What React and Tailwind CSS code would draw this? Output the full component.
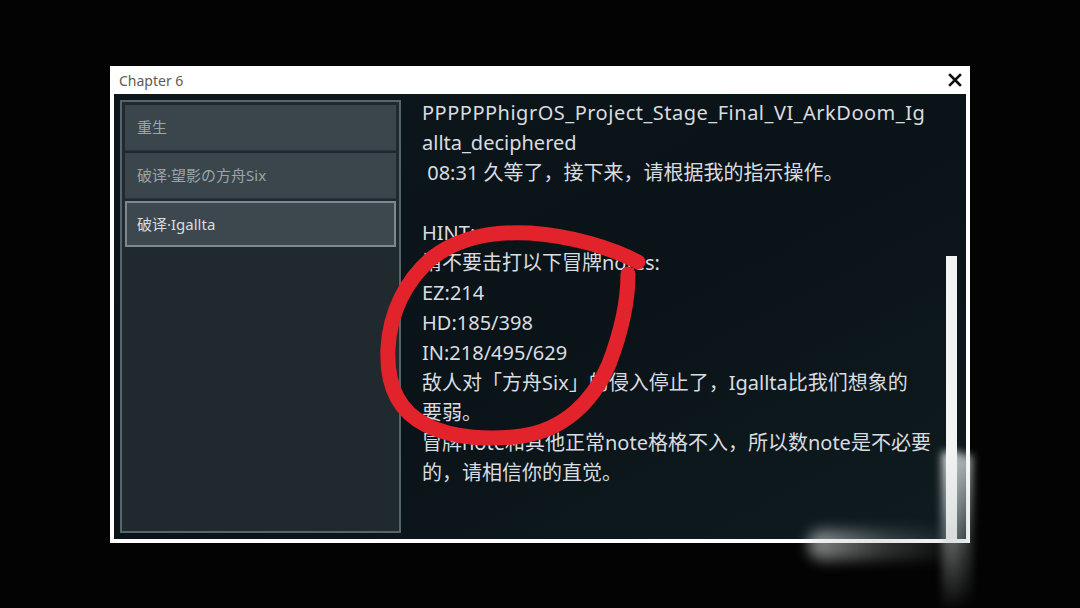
const chapters = [
  { label: '重生', active: false },
  { label: '破译·望影の方舟Six', active: false },
  { label: '破译·Igallta', active: true },
];

const lines = [
  'PPPPPPhigrOS_Project_Stage_Final_VI_ArkDoom_Ig',
  'allta_deciphered',
  '\u00a008:31 久等了，接下来，请根据我的指示操作。',
  '\u00a0',
  'HINT:',
  '请不要击打以下冒牌notes:',
  'EZ:214',
  'HD:185/398',
  'IN:218/495/629',
  '敌人对「方舟Six」的侵入停止了，Igallta比我们想象的',
  '要弱。',
  '冒牌note和其他正常note格格不入，所以数note是不必要',
  '的，请相信你的直觉。',
];

const font = { fontFamily: '"Noto Sans", "Noto Sans CJK SC", sans-serif' };

export default function App() {
  return (
    <div className="relative w-[1080px] h-[608px] overflow-hidden bg-[#030303]" style={font}>
      <div className="pt-[66px] pl-[110px]">
        {/* Window */}
        <div className="w-[860px] h-[477px] bg-white flex flex-col">
          <div className="h-[28px] flex items-center justify-between pl-[9px] pr-[8px]">
            <span className="text-[14px] text-[#5b5b5b]">Chapter 6</span>
            <svg width="14" height="14" viewBox="0 0 14 14">
              <path d="M2 2 L12 12 M12 2 L2 12" stroke="#111" strokeWidth="2.6" strokeLinecap="square" />
            </svg>
          </div>

          <div className="mx-[4px] mb-[4px] flex-1 flex p-[6px] bg-gradient-to-br from-[#0d171b] via-[#0a1317] to-[#0f1b20]">
            {/* Chapter list */}
            <div className="w-[281px] border-2 border-[#56656c] bg-[#1f292e] p-[3px] flex flex-col gap-[2px]">
              {chapters.map((c) => (
                <div
                  key={c.label}
                  className={
                    c.active
                      ? 'h-[46px] flex items-center pl-[10px] bg-[#3c484e] border-2 border-[#7d8b91] text-[15px] text-[#d9dde0]'
                      : 'h-[46px] flex items-center pl-[12px] bg-[#3a464c] border-b border-[#2a3439] text-[15px] text-[#9aa4a9]'
                  }
                >
                  {c.label}
                </div>
              ))}
            </div>

            {/* Text */}
            <div className="flex-1 pl-[21px] -mt-[2px] text-[20px] leading-[30px] text-[#d9dde0]">
              {lines.map((l, i) => (
                <div key={i} className={i === 0 ? 'whitespace-nowrap tracking-[0.5px]' : 'whitespace-nowrap'}>
                  {l}
                </div>
              ))}
            </div>

            {/* Scrollbar */}
            <div className="w-[11px] mr-[3px] pt-[156px] -mb-[6px] flex flex-col">
              <div className="flex-1 bg-[#f2f4f4]" />
            </div>
          </div>
        </div>
      </div>

      {/* Red marker circle */}
      <svg className="absolute left-0 top-0 pointer-events-none" width="1080" height="608" viewBox="0 0 1080 608">
        <path
          d="M638 262 C612 248 572 236 530 233 C492 231 458 238 432 258 C406 280 390 312 388 348 C386 388 400 412 426 425 C454 439 492 440 522 436 C562 430 592 404 609 364 C622 330 628 300 628 274"
          fill="none"
          stroke="#e3232b"
          strokeWidth="15"
          strokeLinecap="round"
          strokeLinejoin="round"
        />
      </svg>

      {/* Camera glare */}
      <div className="absolute left-[942px] top-[452px] w-[18px] h-[156px] blur-[4px] bg-gradient-to-b from-[rgba(240,244,244,0.9)] via-[rgba(200,205,205,0.5)] to-[rgba(120,125,125,0.05)]" />
      <div className="absolute left-[958px] top-[455px] w-[14px] h-[150px] blur-[4px] bg-gradient-to-b from-[rgba(235,240,240,0.75)] via-[rgba(180,185,185,0.35)] to-[rgba(100,105,105,0.03)]" />
      <div className="absolute left-[808px] top-[530px] w-[150px] h-[30px] blur-[7px] rounded-full bg-gradient-to-r from-[rgba(225,230,230,0.6)] via-[rgba(160,165,165,0.3)] to-[rgba(90,95,95,0.05)]" />
    </div>
  );
}
